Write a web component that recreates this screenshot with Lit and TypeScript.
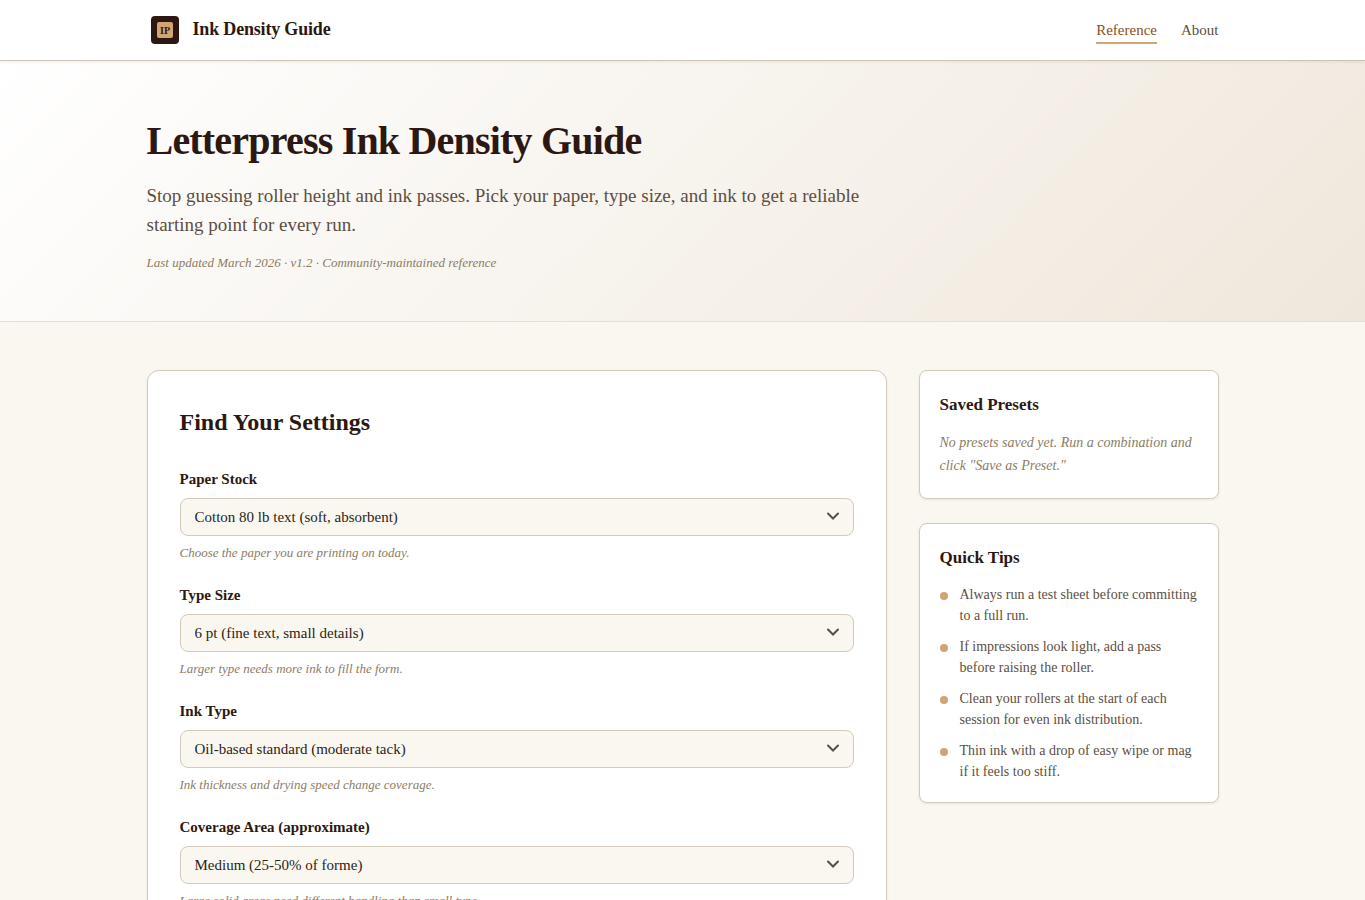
import { LitElement, html, css } from "lit";
import { customElement } from "lit/decorators.js";

interface Field {
  id: string;
  label: string;
  value: string;
  hint: string;
}

const FIELDS: Field[] = [
  { id: "paper", label: "Paper Stock", value: "Cotton 80 lb text (soft, absorbent)", hint: "Choose the paper you are printing on today." },
  { id: "size", label: "Type Size", value: "6 pt (fine text, small details)", hint: "Larger type needs more ink to fill the form." },
  { id: "ink", label: "Ink Type", value: "Oil-based standard (moderate tack)", hint: "Ink thickness and drying speed change coverage." },
  { id: "coverage", label: "Coverage Area (approximate)", value: "Medium (25-50% of forme)", hint: "Large solid areas need different handling than small type." },
];

const TIPS = [
  "Always run a test sheet before committing to a full run.",
  "If impressions look light, add a pass before raising the roller.",
  "Clean your rollers at the start of each session for even ink distribution.",
  "Thin ink with a drop of easy wipe or mag if it feels too stiff.",
];

@customElement("app-root")
export class AppRoot extends LitElement {
  static styles = css`
    :host {
      display: block;
      height: 100vh;
      overflow: hidden;
      background: #faf7f1;
      color: #2c1810;
      font-family: "Liberation Serif", serif;
      font-size: 16px;
      line-height: 1.65;
    }
    * { box-sizing: border-box; }
    h1, h2, h3, p, ul { margin: 0; padding: 0; }
    .wrap { max-width: 1120px; margin: 0 auto; padding: 0 24px; }
    .header {
      position: relative;
      background: #fff;
      border-bottom: 1px solid #cdc8b5;
      box-shadow: 0 1px 3px rgba(44, 24, 16, 0.08);
    }
    .bar { display: flex; align-items: center; justify-content: space-between; height: 60px; }
    .brand { display: flex; align-items: center; gap: 10px; font-size: 18px; font-weight: 700; line-height: 30px; letter-spacing: -0.18px; color: #2c1810; }
    .name { padding-bottom: 3px; }
    .logo { display: block; width: 36px; height: 36px; }
    .nav { display: flex; gap: 24px; font-size: 15px; line-height: 24px; }
    .link { color: #5c4f42; text-decoration: none; padding: 2px 0 0; border-bottom: 2px solid transparent; }
    .active { color: #8b5020; border-color: #d4a574; }
    .hero {
      height: 261px;
      padding-top: 56px;
      background: linear-gradient(135deg, #fff 0%, #efe7db 100%);
      border-bottom: 1px solid #e6dfd1;
    }
    .title { font-size: 40px; line-height: 48px; letter-spacing: -0.8px; margin-bottom: 16px; }
    .lead { max-width: 720px; font-size: 19px; line-height: 29px; color: #5c4f42; margin-bottom: 13px; }
    .meta { font-size: 13px; line-height: 21px; font-style: italic; color: #8b7d65; }
    .main { display: grid; grid-template-columns: minmax(0, 1fr) 300px; gap: 32px; align-items: start; padding-top: 48px; }
    .card { background: #fff; border: 1px solid #d2cbba; border-radius: 8px; padding: 20px; box-shadow: 0 1px 3px rgba(44, 24, 16, 0.08); }
    .form { border-radius: 12px; padding: 32px; }
    .form-title { font-size: 24px; line-height: 39px; margin-bottom: 25px; }
    .field { display: flex; flex-direction: column; height: 116px; }
    .label { font-size: 15px; font-weight: 700; line-height: 24px; margin-bottom: 7px; }
    .control { display: grid; align-items: center; }
    .select {
      grid-area: 1 / 1;
      appearance: none;
      width: 100%;
      height: 38px;
      padding: 0 40px 0 14px;
      border: 1px solid #d2cbba;
      border-radius: 8px;
      background: #faf7f1;
      color: #2c2416;
      font: inherit;
      font-size: 15px;
      line-height: 17px;
    }
    .chevron { grid-area: 1 / 1; justify-self: end; width: 12px; height: 8px; margin: 0 15px 2px 0; pointer-events: none; }
    .hint { font-size: 13px; line-height: 21px; font-style: italic; color: #8b7d65; margin-top: 6px; }
    .side { display: grid; gap: 24px; }
    .side-title { font-size: 17px; line-height: 28px; margin-bottom: 12px; }
    .empty { font-size: 14px; line-height: 23px; font-style: italic; color: #8b7d65; padding-bottom: 1px; }
    .tips { list-style: none; display: grid; gap: 10px; }
    .tip { display: flex; gap: 12px; font-size: 14px; line-height: 21px; color: #5c4f42; }
    .dot { flex: none; width: 8px; height: 8px; margin-top: 8px; border-radius: 50%; background: #d0a574; }
  `;

  render() {
    return html`
      <header class="header">
        <div class="wrap bar">
          <div class="brand">
            <svg class="logo" viewBox="0 0 36 36" aria-hidden="true">
              <rect x="4" y="4" width="28" height="28" rx="4" fill="#2c1810" />
              <rect x="10" y="10" width="16" height="16" rx="2" fill="#d4a574" />
              <text x="18" y="22" text-anchor="middle" font-size="10" font-weight="700" letter-spacing="0" fill="#2c1810">IP</text>
            </svg>
            <span class="name">Ink Density Guide</span>
          </div>
          <nav class="nav">
            <a class="link active" href="#">Reference</a>
            <a class="link" href="#about">About</a>
          </nav>
        </div>
      </header>
      <section class="hero">
        <div class="wrap">
          <h1 class="title">Letterpress Ink Density Guide</h1>
          <p class="lead">Stop guessing roller height and ink passes. Pick your paper, type size, and ink to get a reliable starting point for every run.</p>
          <p class="meta">Last updated March 2026 · v1.2 · Community-maintained reference</p>
        </div>
      </section>
      <main class="wrap main">
        <section class="card form">
          <h2 class="form-title">Find Your Settings</h2>
          ${FIELDS.map(
            (f) => html`
              <div class="field">
                <label class="label" for=${f.id}>${f.label}</label>
                <div class="control">
                  <select class="select" id=${f.id}><option>${f.value}</option></select>
                  <svg class="chevron" viewBox="0 0 12 8" aria-hidden="true">
                    <path d="M1 1.5 6 6.5 11 1.5" fill="none" stroke="#5c4f42" stroke-width="2" stroke-linecap="round" />
                  </svg>
                </div>
                <p class="hint">${f.hint}</p>
              </div>
            `,
          )}
        </section>
        <aside class="side">
          <section class="card">
            <h3 class="side-title">Saved Presets</h3>
            <p class="empty">No presets saved yet. Run a combination and click "Save as Preset."</p>
          </section>
          <section class="card">
            <h3 class="side-title">Quick Tips</h3>
            <ul class="tips">
              ${TIPS.map((t) => html`<li class="tip"><span class="dot"></span><span>${t}</span></li>`)}
            </ul>
          </section>
        </aside>
      </main>
    `;
  }
}
